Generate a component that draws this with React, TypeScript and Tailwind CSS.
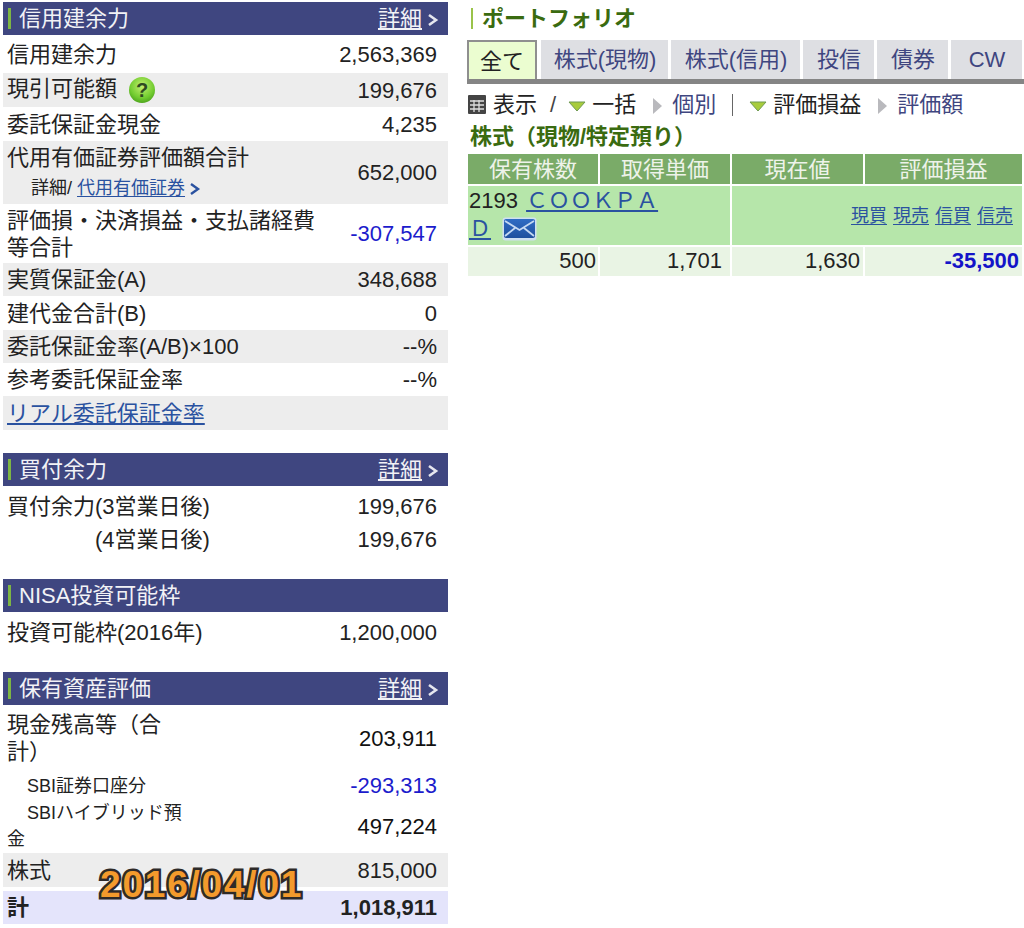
import * as React from "react";

const ink = "text-[#222]";

const Header = ({ title, more = true }: { title: string; more?: boolean }) => (
  <div className="flex h-[33px] items-center justify-between bg-[#3f4680] pl-[5px] pr-[9px] text-[#f2f2f6]">
    <div className="flex items-center">
      <span className="mr-[8px] h-[21px] w-[3px] bg-[#7db544]" />
      <span>{title}</span>
    </div>
    {more && (
      <div className="flex items-center">
        <span className="underline underline-offset-2">詳細</span>
        <svg width="12" height="14" viewBox="0 0 12 14" className="ml-[5px] mt-[2px]">
          <path d="M2 2l7 5-7 5" fill="none" stroke="#e6e6ee" strokeWidth="2.6" />
        </svg>
      </div>
    )}
  </div>
);

const Row = ({
  h,
  gray,
  value,
  valueClass = "",
  children,
}: {
  h: string;
  gray?: boolean;
  value?: string;
  valueClass?: string;
  children: React.ReactNode;
}) => (
  <div className={`flex items-center justify-between pl-[4px] pr-[11px] ${h} ${gray ? "bg-[#ededed]" : ""}`}>
    <div className="leading-[27px]">{children}</div>
    {value && <div className={valueClass}>{value}</div>}
  </div>
);

const Help = () => (
  <svg width="28" height="28" viewBox="0 0 28 28" className="ml-[11px]">
    <defs>
      <radialGradient id="help" cx="50%" cy="35%" r="65%">
        <stop offset="0%" stopColor="#c4f070" />
        <stop offset="70%" stopColor="#72cc30" />
        <stop offset="100%" stopColor="#4fa61e" />
      </radialGradient>
    </defs>
    <circle cx="14" cy="14" r="13" fill="url(#help)" />
    <text x="14" y="21" textAnchor="middle" fontSize="20" fontWeight="700" fill="#2f4a22" fontFamily="Liberation Sans, sans-serif">
      ?
    </text>
  </svg>
);

const Mail = () => (
  <svg width="35" height="24" viewBox="0 0 35 24" className="ml-[11px] inline-block align-[-5px]">
    <defs>
      <linearGradient id="mail" x1="0" y1="0" x2="0" y2="1">
        <stop offset="0%" stopColor="#2f6cc4" />
        <stop offset="100%" stopColor="#1f4f9e" />
      </linearGradient>
    </defs>
    <rect x="0.5" y="0.5" width="34" height="23" rx="3" fill="#cfdff0" />
    <rect x="2" y="2" width="31" height="19" rx="2" fill="url(#mail)" />
    <path d="M3 4l14.500 9L32 4M3 19l10-8M32 19l-10-8" fill="none" stroke="#c4d8f2" strokeWidth="1.800" />
  </svg>
);

const Down = () => (
  <svg width="18" height="11" viewBox="0 0 18 11" className="mt-[3px]">
    <path d="M1 1h16L9 10z" fill="#a8cc3c" stroke="#6f9a52" strokeWidth="1" />
  </svg>
);

const Right = () => (
  <svg width="11" height="18" viewBox="0 0 11 18" className="mt-[3px]">
    <path d="M1 1l9 8-9 8z" fill="#b9b9bd" />
  </svg>
);

const tabs = ["株式(現物)", "株式(信用)", "投信", "債券", "CW"];
const tabWidths = ["w-[127px]", "w-[129px]", "w-[71px]", "w-[71px]", "w-[71px]"];

export default function App() {
  return (
    <div
      className={`relative flex h-[928px] w-[1024px] overflow-hidden bg-white text-[22px] leading-[27px] ${ink}`}
      style={{ fontFamily: '"Liberation Sans", "Noto Sans CJK JP", sans-serif' }}
    >
      {/* 左カラム */}
      <div className="ml-[3px] w-[445px] pt-[2px]">
        <Header title="信用建余力" />
        <Row h="h-[38px]" value="2,563,369">信用建余力</Row>
        <Row h="h-[34px]" gray value="199,676">
          <div className="flex items-center">
            <span className="pb-[3px]">現引可能額</span>
            <Help />
          </div>
        </Row>
        <Row h="h-[34px]" value="4,235">委託保証金現金</Row>
        <Row h="h-[63px]" gray value="652,000">
          <div>代用有価証券評価額合計</div>
          <div className="flex items-center pl-[24px] pt-[4px] text-[18px] leading-[26px]">
            詳細/&nbsp;
            <span className="text-[#2a52a0] underline underline-offset-2">代用有価証券</span>
            <svg width="12" height="14" viewBox="0 0 12 14" className="ml-[4px] mt-[1px]">
              <path d="M2 2l7 5-7 5" fill="none" stroke="#2a52a0" strokeWidth="2.4" />
            </svg>
          </div>
        </Row>
        <Row h="h-[59px]" value="-307,547" valueClass="text-[#1c1ccc]">
          <div>評価損・決済損益・支払諸経費</div>
          <div>等合計</div>
        </Row>
        <Row h="h-[33px]" gray value="348,688">実質保証金(A)</Row>
        <Row h="h-[34px]" value="0">建代金合計(B)</Row>
        <Row h="h-[33px]" gray value="--%">委託保証金率(A/B)×100</Row>
        <Row h="h-[33px]" value="--%">参考委託保証金率</Row>
        <Row h="h-[34px]" gray>
          <span className="text-[#2a52a0] underline underline-offset-2">リアル委託保証金率</span>
        </Row>

        <div className="mt-[23px]">
          <Header title="買付余力" />
          <div className="mt-[4px]">
            <Row h="h-[33px]" value="199,676">買付余力(3営業日後)</Row>
            <Row h="h-[33px]" value="199,676">
              <span className="pl-[88px]">(4営業日後)</span>
            </Row>
          </div>
        </div>

        <div className="mt-[23px]">
          <Header title="NISA投資可能枠" more={false} />
          <div className="mt-[3px]">
            <Row h="h-[35px]" value="1,200,000">投資可能枠(2016年)</Row>
          </div>
        </div>

        <div className="mt-[22px]">
          <Header title="保有資産評価" />
          <Row h="h-[66px]" value="203,911" valueClass="text-[#111]">
            現金残高等（合
            <br />
            計）
          </Row>
          <Row h="h-[28px]" value="-293,313" valueClass="text-[#1c1ccc]">
            <span className="pl-[20px] text-[18px]">SBI証券口座分</span>
          </Row>
          <Row h="h-[54px]" value="497,224" valueClass="text-[#111]">
            <div className="pl-[20px] text-[18px] leading-[26px]">SBIハイブリッド預</div>
            <div className="text-[18px] leading-[26px]">金</div>
          </Row>
          <Row h="h-[34px]" gray value="815,000">株式</Row>
          <div className="relative mt-[4px]">
            <Row h="h-[33px] !bg-[#e4e4fb] font-bold" gray value="1,018,911">計</Row>
            <div className="absolute left-[97px] top-[-24px] text-[37px] font-bold leading-[36px] tracking-[1.8px] text-[#f39a2c] [-webkit-text-stroke:5px_#2e2a28] [paint-order:stroke_fill]">
              2016/04/01
            </div>
          </div>
        </div>
      </div>

      {/* 右カラム */}
      <div className="ml-[20px] flex-1">
        <div className="flex items-center pl-[3px] pt-[5px] text-[22px] font-bold text-[#3a6b10]">
          <span className="mr-[9px] h-[21px] w-[2px] bg-[#9ac34a]" />
          ポートフォリオ
        </div>

        <div className="mt-[8px] flex h-[39px] gap-[3px]">
          <div className="-ml-px mr-[1px] flex w-[70px] items-center justify-center border-2 border-b-0 border-[#8f8f8f] bg-[#ebfdd0] pt-[1px] text-[#222]">全て</div>
          {tabs.map((tab, i) => (
            <div key={tab} className={`flex items-center justify-center bg-[#dedfe3] pl-[1px] text-[#3f4680] ${tabWidths[i]}`}>
              {tab}
            </div>
          ))}
        </div>
        <div className="-ml-px h-[5px] bg-[#858585]" />

        <div className="mt-[7px] flex h-[27px] items-center text-[#3f4680]">
          <svg width="18" height="19" viewBox="0 0 18 19">
            <rect width="18" height="19" rx="1" fill="#444" />
            <path d="M2 6h14M2 10h14M2 14h14M6 5v12M11 5v12" stroke="#ddd" strokeWidth="1.300" />
          </svg>
          <span className="ml-[7px] text-[#222]">表示</span>
          <span className="ml-[13px] text-[#444]">/</span>
          <span className="ml-[12px]"><Down /></span>
          <span className="ml-[6px] text-[#222]">一括</span>
          <span className="ml-[16px]"><Right /></span>
          <span className="ml-[9px]">個別</span>
          <span className="ml-[16px] h-[22px] w-px bg-[#666]" />
          <span className="ml-[16px]"><Down /></span>
          <span className="ml-[6px] text-[#222]">評価損益</span>
          <span className="ml-[16px]"><Right /></span>
          <span className="ml-[9px]">評価額</span>
        </div>

        <div className="mt-[5px] pl-[2px] text-[22px] font-bold text-[#3a6b10]">株式（現物/特定預り）</div>

        <div className="mt-[4px] w-[554px]">
          <div className="grid h-[30px] grid-cols-[130px_130px_131px_1fr] gap-x-[2px] bg-white text-center text-[#eef3ea]">
            {["保有株数", "取得単価", "現在値", "評価損益"].map((h) => (
              <div key={h} className="flex items-center justify-center bg-[#7aab68]">{h}</div>
            ))}
          </div>
          <div className="mt-[2px] grid h-[59px] grid-cols-[262px_1fr] gap-x-[2px]">
            <div className="bg-[#b6e6aa] pl-[1px] pt-[1px] leading-[28px] text-[#222]">
              2193 <span className="ml-[2px] text-[#2a52a0] underline underline-offset-2">ＣＯＯＫＰＡ</span>
              <br />
              <span className="text-[#2a52a0] underline underline-offset-2">Ｄ</span>
              <Mail />
            </div>
            <div className="flex items-center justify-end gap-[6px] bg-[#b6e6aa] pr-[9px] pt-[1px] text-[18px] text-[#2a52a0]">
              {["現買", "現売", "信買", "信売"].map((l) => (
                <span key={l} className="underline underline-offset-2">{l}</span>
              ))}
            </div>
          </div>
          <div className="mt-[2px] grid h-[29px] grid-cols-[130px_130px_131px_1fr] gap-x-[2px] text-right">
            <div className="bg-[#e9f4e4] pr-[2px]">500</div>
            <div className="bg-[#e9f4e4] pr-[8px]">1,701</div>
            <div className="bg-[#e9f4e4] pr-[3px]">1,630</div>
            <div className="bg-[#e9f4e4] pr-[3px] font-bold text-[#1414c8]">-35,500</div>
          </div>
        </div>
      </div>
    </div>
  );
}
